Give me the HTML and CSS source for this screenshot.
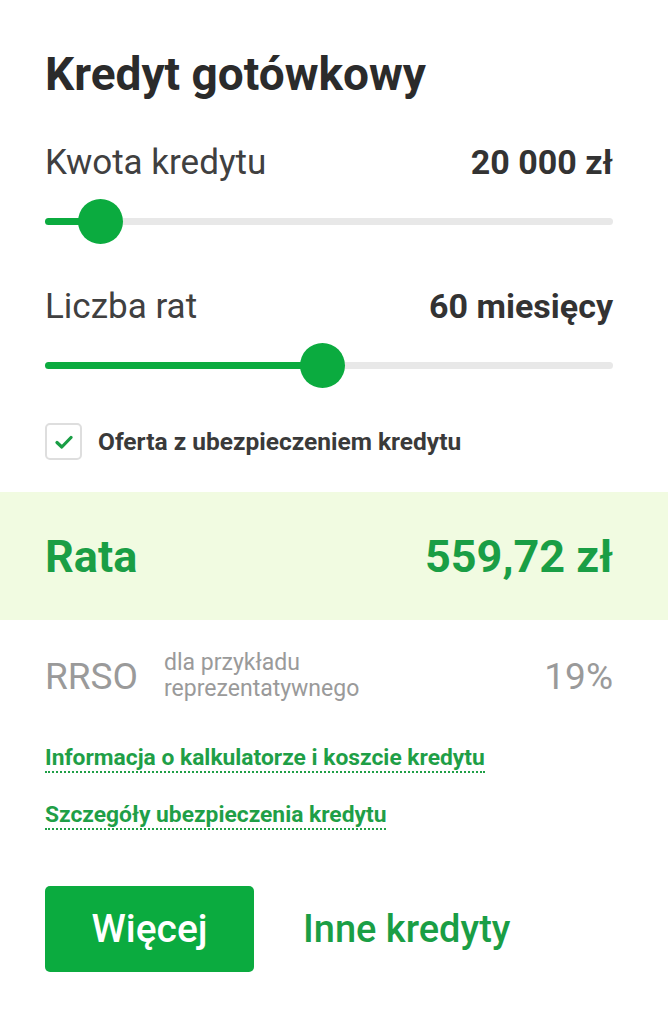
FILE: index.html
```html
<!DOCTYPE html>
<html lang="pl">
<head>
<meta charset="utf-8">
<title>Kredyt gotówkowy</title>
<link rel="stylesheet" href="styles.css">
</head>
<body>
<div class="calc">
  <div class="inner">
    <h1 class="title">Kredyt gotówkowy</h1>

    <div class="field">
      <div class="field-row">
        <span class="label">Kwota kredytu</span>
        <span class="value">20 000 zł</span>
      </div>
      <div class="slider">
        <div class="track">
          <div class="fill" style="width: 9.7%"></div>
          <div class="thumb" style="left: 9.7%"></div>
        </div>
      </div>
    </div>

    <div class="field field-second">
      <div class="field-row">
        <span class="label">Liczba rat</span>
        <span class="value">60 miesięcy</span>
      </div>
      <div class="slider">
        <div class="track">
          <div class="fill" style="width: 48.9%"></div>
          <div class="thumb" style="left: 48.9%"></div>
        </div>
      </div>
    </div>

    <label class="check">
      <span class="box">
        <svg width="18" height="14" viewBox="0 0 18 14"><path d="M2 7.5 L6.8 12 L16 2.5" fill="none" stroke="#1a9e45" stroke-width="3.2" stroke-linecap="round" stroke-linejoin="round"/></svg>
      </span>
      <span class="check-text">Oferta z ubezpieczeniem kredytu</span>
    </label>
  </div>

  <div class="band">
    <span class="rata">Rata</span>
    <span class="rata-value">559,72 zł</span>
  </div>

  <div class="inner">
    <div class="rrso">
      <div class="rrso-left">
        <span class="rrso-label">RRSO</span>
        <span class="rrso-note">dla przykładu<br>reprezentatywnego</span>
      </div>
      <span class="rrso-value">19%</span>
    </div>

    <div class="links">
      <a class="link" href="#">Informacja o kalkulatorze i koszcie kredytu</a>
      <a class="link" href="#">Szczegóły ubezpieczenia kredytu</a>
    </div>

    <div class="actions">
      <a class="btn" href="#">Więcej</a>
      <a class="other" href="#">Inne kredyty</a>
    </div>
  </div>
</div>
</body>
</html>
```

FILE: styles.css
```css
* { box-sizing: border-box; }

html, body {
  margin: 0;
  padding: 0;
  background: #ffffff;
}

body {
  font-family: Roboto, "Liberation Sans", Arial, sans-serif;
  color: #2d2d2d;
  width: 668px;
  height: 1024px;
  overflow: hidden;
}

.calc {
  display: flex;
  flex-direction: column;
}

.inner {
  padding: 0 55px 0 45px;
  display: flex;
  flex-direction: column;
}

.title {
  margin: 49px 0 0;
  font-size: 46px;
  line-height: 50px;
  font-weight: 700;
  color: #2b2b2b;
}

.field {
  margin-top: 43px;
  display: flex;
  flex-direction: column;
}

.field-second {
  margin-top: 42px;
}

.field-row {
  display: flex;
  justify-content: space-between;
  align-items: baseline;
  height: 40px;
  line-height: 40px;
}

.label {
  font-size: 35px;
  font-weight: 400;
  color: #404040;
}

.value {
  font-size: 34px;
  font-weight: 700;
  color: #333333;
}

.slider {
  margin-top: 16px;
  height: 46px;
  display: flex;
  align-items: center;
}

.track {
  position: relative;
  width: 100%;
  height: 7px;
  border-radius: 4px;
  background: #e8e8e8;
}

.fill {
  height: 100%;
  border-radius: 4px;
  background: #0bab3f;
}

.thumb {
  position: absolute;
  top: 50%;
  width: 45px;
  height: 45px;
  margin: -22.5px 0 0 -22.5px;
  border-radius: 50%;
  background: #0bab3f;
}

.check {
  margin-top: 35px;
  display: flex;
  align-items: center;
  gap: 16px;
}

.box {
  width: 37px;
  height: 37px;
  border: 2px solid #dedede;
  border-radius: 5px;
  display: flex;
  align-items: center;
  justify-content: center;
}

.check-text {
  font-size: 24.5px;
  font-weight: 700;
  color: #3a3a3a;
}

.band {
  margin-top: 32px;
  height: 128px;
  background: #f1fbe1;
  padding: 0 55px 0 45px;
  display: flex;
  justify-content: space-between;
  align-items: center;
}

.rata,
.rata-value {
  font-size: 45px;
  font-weight: 700;
  color: #1a9e45;
}

.rrso {
  margin-top: 30px;
  display: flex;
  justify-content: space-between;
  align-items: center;
}

.rrso-left {
  display: flex;
  align-items: center;
  gap: 26px;
}

.rrso-label,
.rrso-value {
  font-size: 37px;
  font-weight: 400;
  color: #9a9a9a;
}

.rrso-note {
  font-size: 23px;
  line-height: 26px;
  color: #9a9a9a;
}

.links {
  margin-top: 43px;
  display: flex;
  flex-direction: column;
  align-items: flex-start;
  gap: 29px;
}

.link {
  font-size: 22.8px;
  font-weight: 700;
  line-height: 26px;
  color: #1f9f47;
  text-decoration: none;
  border-bottom: 2px dotted #1f9f47;
}

.actions {
  margin-top: 56px;
  display: flex;
  align-items: center;
  gap: 49px;
}

.btn {
  width: 209px;
  height: 86px;
  border-radius: 5px;
  background: #0bab3f;
  color: #ffffff;
  font-size: 39px;
  font-weight: 500;
  text-decoration: none;
  display: flex;
  align-items: center;
  justify-content: center;
}

.other {
  font-size: 38px;
  font-weight: 500;
  color: #1a9e45;
  text-decoration: none;
}
```
